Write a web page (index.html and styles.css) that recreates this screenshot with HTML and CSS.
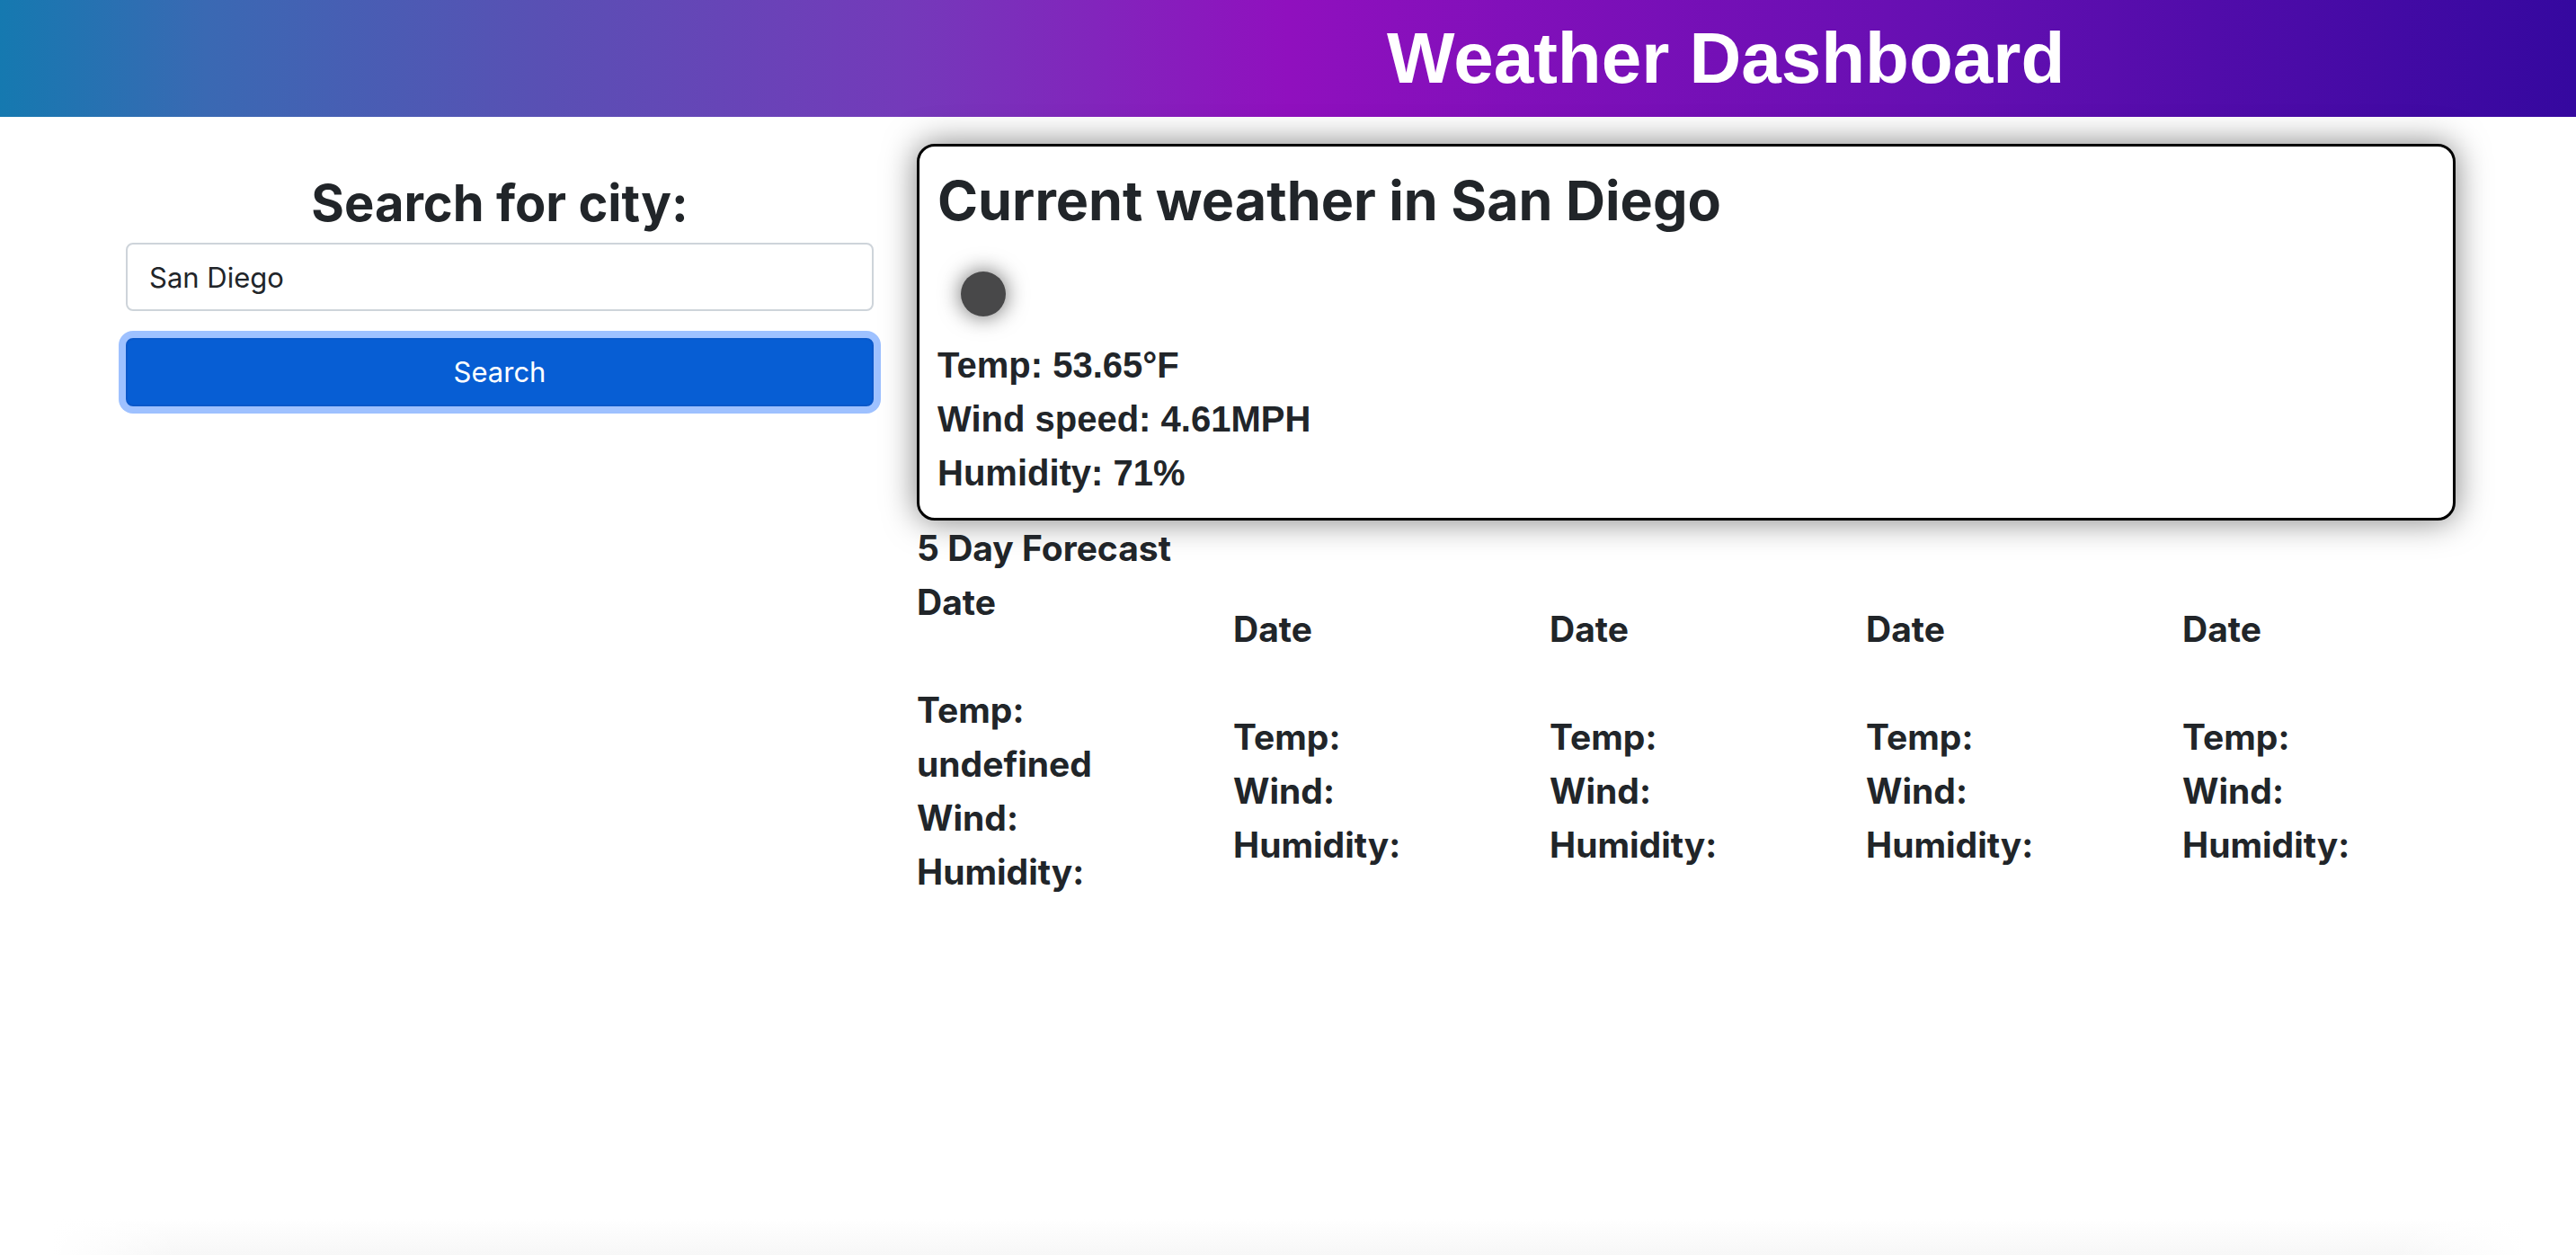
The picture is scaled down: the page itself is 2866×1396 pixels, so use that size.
FILE: index.html
```html
<!DOCTYPE html>
<html lang="en">
<head>
  <meta charset="utf-8">
  <meta name="viewport" content="width=device-width, initial-scale=1">
  <title>Weather Dashboard</title>
  <link rel="stylesheet" href="styles.css">
</head>
<body class="page">
  <header class="header">
    <h1 class="header-title">Weather Dashboard</h1>
  </header>

  <main class="layout">
    <form class="search">
      <label class="search-label" for="city">Search for city:</label>
      <input class="search-input" id="city" type="text" value="San Diego">
      <button class="search-button" type="button">Search</button>
    </form>

    <div class="results">
      <section class="current">
        <h2 class="current-title">Current weather in San Diego</h2>
        <svg class="current-icon" viewBox="0 0 100 100" role="img" aria-label="Clear night">
          <circle cx="51" cy="51" r="25" fill="#484849"/>
        </svg>
        <p class="current-line">Temp: 53.65°F</p>
        <p class="current-line">Wind speed: 4.61MPH</p>
        <p class="current-line">Humidity: 71%</p>
      </section>

      <section class="forecast">
        <h3 class="forecast-title">5 Day Forecast</h3>
        <div class="forecast-days">
          <article class="day">
            <p class="day-date">Date</p>
            <p>Temp:<br>undefined</p>
            <p>Wind:</p>
            <p>Humidity:</p>
          </article>
          <article class="day">
            <p class="day-date">Date</p>
            <p>Temp:</p>
            <p>Wind:</p>
            <p>Humidity:</p>
          </article>
          <article class="day">
            <p class="day-date">Date</p>
            <p>Temp:</p>
            <p>Wind:</p>
            <p>Humidity:</p>
          </article>
          <article class="day">
            <p class="day-date">Date</p>
            <p>Temp:</p>
            <p>Wind:</p>
            <p>Humidity:</p>
          </article>
          <article class="day">
            <p class="day-date">Date</p>
            <p>Temp:</p>
            <p>Wind:</p>
            <p>Humidity:</p>
          </article>
        </div>
      </section>
    </div>
  </main>

  <footer class="page-end"></footer>
</body>
</html>
```
FILE: styles.css
```css
*,
*::before,
*::after {
  box-sizing: border-box;
}

.page {
  display: flex;
  flex-direction: column;
  min-height: 100vh;
  margin: 0;
  background: #fff;
  color: #212529;
  font-family: Inter, "Liberation Sans", sans-serif;
}

h1,
h2,
h3,
p {
  margin: 0;
}

/* Header */

.header {
  padding-left: 34%;
  background: linear-gradient(90deg, #1579b0 0%, #3a69b3 8%, #5950b4 21%, #743aba 35%, #9010be 50%, #660fb2 75%, #35089f 100%);
}

.header-title {
  color: #fff;
  font-family: "Liberation Sans", Arial, sans-serif;
  font-size: 80px;
  font-weight: 700;
  line-height: 130px;
  text-align: center;
}

/* Two-column layout */

.layout {
  display: grid;
  grid-template-columns: minmax(0, 832fr) minmax(0, 1712fr);
  column-gap: 48px;
  padding: 30px 134px 0 140px;
}

/* Search form */

.search {
  display: flex;
  flex-direction: column;
  padding-top: 30px;
}

.search-label {
  margin-bottom: 8px;
  font-size: 56px;
  font-weight: 700;
  line-height: 72px;
  text-align: center;
}

.search-input,
.search-button {
  width: 100%;
  height: 76px;
  border-radius: 8px;
  font-family: inherit;
  font-size: 31px;
  line-height: 48px;
}

.search-input {
  margin-bottom: 30px;
  padding: 12px 24px;
  border: 2px solid #ced4da;
  background: #fff;
  color: inherit;
}

.search-button {
  padding: 12px 24px;
  border: 2px solid #0a58ca;
  background: #075ed4;
  box-shadow: 0 0 0 8px #9ec1ff;
  color: #fff;
  cursor: pointer;
}

/* Current weather */

.current {
  padding: 20px;
  border: 3px solid #000;
  border-radius: 20px;
  background: #fff;
  box-shadow: 0 0 36px rgba(0, 0, 0, 0.5);
}

.current-title {
  margin-bottom: 13px;
  font-size: 61px;
  font-weight: 700;
  line-height: 80px;
}

.current-icon {
  display: block;
  width: 100px;
  height: 100px;
  overflow: visible;
  filter: drop-shadow(0 0 12px rgba(0, 0, 0, 0.6));
}

.current-line {
  font-family: "Liberation Sans", Arial, sans-serif;
  font-size: 40px;
  font-weight: 700;
  line-height: 60px;
}

/* Forecast */

.forecast {
  position: relative;
  padding-top: 1px;
  font-size: 39px;
  font-weight: 700;
  line-height: 60px;
}

.forecast-title {
  font-size: inherit;
}

.forecast-days {
  display: grid;
  grid-template-columns: repeat(5, minmax(0, 1fr));
  column-gap: 48px;
  align-items: center;
}

.day-date {
  margin-bottom: 60px;
}

/* Soft shade along the bottom of the page */

.page-end {
  height: 40px;
  margin-top: auto;
  background:
    linear-gradient(90deg, #fff 2%, transparent 7%, transparent 93%, #fff 98%),
    linear-gradient(#fff, #f7f7f7);
}
```
